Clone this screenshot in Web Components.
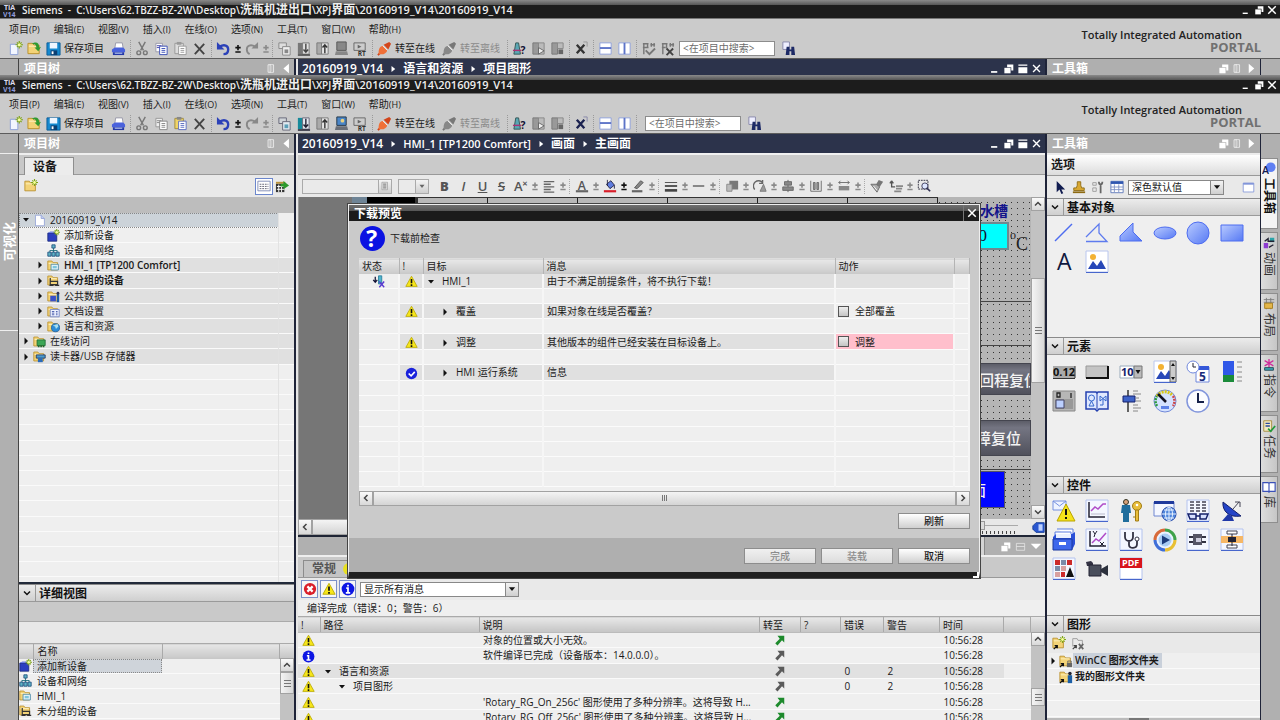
<!DOCTYPE html>
<html lang="zh-CN">
<head>
<meta charset="utf-8">
<title>Siemens - 20160919_V14</title>
<style>
html,body{height:100%;margin:0}
body{display:flex;flex-direction:column;overflow:hidden;background:#b0b0b0;color:#1a1a1a;
font-family:"Open Sans","Noto Sans CJK SC",sans-serif;font-size:10px;line-height:15px}
.strip{flex:0 0 75px;overflow:hidden}
.main{flex:1;min-height:0}
</style>
</head>
<body>
<tia-shell class="strip" variant="graphics"></tia-shell>
<tia-shell class="main" variant="screens">
<tia-project-tree slot="left"></tia-project-tree>
<tia-detail-view slot="left"></tia-detail-view>
<tia-editor slot="centre"></tia-editor>
<tia-inspector slot="centre"></tia-inspector>
<tia-toolbox slot="right"></tia-toolbox>
<tia-download-dialog slot="overlay"></tia-download-dialog>
</tia-shell>
<script>
const BASE=`*{box-sizing:border-box}
:host{display:block;box-sizing:border-box}
button,input,select{font:inherit;color:inherit;margin:0}
.ib{border:0;background:none;padding:0;display:flex;align-items:center;justify-content:center}
table{border-collapse:collapse;table-layout:fixed;width:100%}
th,td{padding:0;text-align:left;font-weight:400;white-space:nowrap;overflow:hidden}
td{line-height:14px}`;
function define(name,css,html){
  customElements.define(name,class extends HTMLElement{
    constructor(){super();this.attachShadow({mode:'open'});}
    connectedCallback(){this.shadowRoot.innerHTML='<style>'+BASE+css+'</style>'+html(this);}
  });
}

/* ---------- icons ---------- */
const folder='<path d="M1 13.500V2.500h5l1.500 2H13v9z" fill="#f3d377" stroke="#b98f2a"/><path d="M2 5.500h10" stroke="#fff2c4"/>';
const star='<path d="M12 0v8M8 4h8M9.500 1.500l5 5M14.500 1.500l-5 5" stroke="#7fa51a" stroke-width="1.300"/><circle cx="12" cy="4" r="1.600" fill="#f6ff9a"/>';
const doc=(c)=>`<path d="M6 5.500h8v9H6z" fill="#fff" stroke="${c}"/><path d="M8 8h4M8 10h4M8 12h4" stroke="${c}"/>`;
const net='<path d="M8 4v4M3.500 11V8h9v3M8 8v3" stroke="#167" fill="none"/><path d="M6 1h4v4H6zM1 10h4v5H1zM6 10h4v5H6zM11 10h4v5h-4z" fill="#5fb3c4" stroke="#1c4c7c"/>';
const pic=(x='')=>`<path d="M1 1h22v21H1z" fill="#fff" stroke="#b9c6ee"/><circle cx="8" cy="7" r="3" fill="#f3b234"/><path d="M3 19l5-8 4 5 4-6 5 9z" fill="#2747b8"/>${x}<path d="M1 22.500h22" stroke="#4766cc"/>`;
const card='<path d="M1 1h22v21H1z" fill="#f4f7ff" stroke="#b4c3ee"/><path d="M1 22.500h22" stroke="#4766cc"/>';
const grad='<defs><linearGradient id="g" x1="0" y1="0" x2="1" y2="1"><stop offset="0" stop-color="#b9cbff"/><stop offset="1" stop-color="#5679f4"/></linearGradient></defs>';
const tri=(c)=>`<path d="M8 1.500L15 14H1z" fill="#f7e61a" stroke="${c}"/><path d="M8 5v5M8 11.500v2" stroke="#111" stroke-width="2"/>`;
const plug=(a,b)=>`<path d="M1 15l3-3" stroke="${b}" stroke-width="2"/><path d="M2 14c-1-5 1-8 4-9l5 5c-1 3-4 5-9 4z" fill="${a}"/><path d="M7 4l6-3 2 2-3 6z" fill="${b}"/><path d="M6 5l5 5" stroke="#fff" stroke-width=".8"/>`;
const tx=(x,y,s,c,t,w=700)=>`<text x="${x}" y="${y}" font-size="${s}" font-weight="${w}" fill="${c}">${t}</text>`;
const I={
 logo:tx(1,8,8,'#dde','TIA')+tx(0,16,8,'#8e9ad8','V14'),
 new:'<path d="M2.500 3.500h8v11h-8z" fill="#f2f6ff" stroke="#8ca0d8"/>'+star,
 open:folder+'<path d="M5 3c5-3 8-1 8 4l2-1-3 5-4-4h2c0-3-2-4-5-4z" fill="#2f9a2f"/>',
 save:'<path d="M1 2h14v13H1z" fill="#1689cf" stroke="#0d5d99"/><path d="M4 2h8v6H4z" fill="#eef6ff"/><path d="M5 10h7v5H5z" fill="#0b3f72"/><path d="M6 11h2v3H6z" fill="#fff"/>',
 print:'<path d="M5 2h7l1 6H4z" fill="#fff" stroke="#99a"/><path d="M1 9l3-2h9l2 2v3H1z" fill="#4a62dc"/><path d="M2 12h12v3H2z" fill="#2438a8"/><path d="M4 13h8" stroke="#cdf"/>',
 cut:'<path d="M4 1l5 9M11 1L6 10" stroke="#777" stroke-width="1.500"/><circle cx="4" cy="12.500" r="2" fill="none" stroke="#777" stroke-width="1.500"/><circle cx="11" cy="12.500" r="2" fill="none" stroke="#777" stroke-width="1.500"/>',
 copyb:'<path d="M2 2.500h7v9H2z" fill="#fff" stroke="#99a"/><path d="M3 5h5M3 7h5" stroke="#44a"/>'+doc('#3c50b8'),
 copyg:'<path d="M2 2.500h7v9H2z" fill="#eee" stroke="#999"/><path d="M3 5h5M3 7h5" stroke="#888"/>'+doc('#888'),
 paste:'<path d="M2 2.500h9v11H2z" fill="#f0d468" stroke="#a08c40"/><path d="M4 1h5v3H4z" fill="#888"/>'+doc('#5a6cc0'),
 pasteg:'<path d="M2 2.500h9v11H2z" fill="#ddd" stroke="#999"/><path d="M4 1h5v3H4z" fill="#999"/>'+doc('#999'),
 del:'<path d="M3 3l10 11M13 3L3 14" stroke="#444" stroke-width="2"/>',
 undo:'<path d="M4 6c5-3 9-1 9 3 0 3-2 5-5 5" fill="none" stroke="#2b41b8" stroke-width="2.500"/><path d="M1 1v8h8z" fill="#2b41b8"/>',
 redo:'<path d="M12 6C7 3 3 5 3 9c0 3 1 4 3 5" fill="none" stroke="#888" stroke-width="2"/><path d="M15 1v7H8z" fill="#888"/>',
 pm:'<path d="M4.500 4v6M1.500 7h6M1.500 12h6" stroke="#111" stroke-width="1.800"/>',
 pmg:'<path d="M4.500 4v6M1.500 7h6M1.500 12h6" stroke="#8a8a8a" stroke-width="1.800"/>',
 comp:'<path d="M2 2h8v6H2z" fill="#cfd4d8" stroke="#667"/><path d="M6 6h8v9H6z" fill="#dfe8ee" stroke="#667"/><path d="M8 9h4v4H8z" fill="#5b9fb8"/>',
 compg:'<path d="M2 2h8v6H2z" fill="#ddd" stroke="#888"/><path d="M6 6h8v9H6z" fill="#eee" stroke="#888"/><path d="M8 9h4v4H8z" fill="#888"/>',
 dl:'<path d="M2 2h5v12H2z" fill="#17899a"/><path d="M7 2h7v12H7z" fill="#e6eaf2" stroke="#667"/><path d="M10.500 3v8M8 9l2.500 3L13 9M2 15h13" stroke="#223" stroke-width="1.500" fill="none"/>',
 dlg:'<path d="M2 2h5v12H2z" fill="#777"/><path d="M7 2h7v12H7z" fill="#e0e0e0" stroke="#777"/><path d="M10.500 3v8M8 9l2.500 3L13 9M2 15h13" stroke="#444" stroke-width="1.500" fill="none"/>',
 ul:'<path d="M2 2h5v12H2z" fill="#aaa" stroke="#777"/><path d="M7 2h7v12H7z" fill="#e6e6e6" stroke="#777"/><path d="M10.500 13V4M8 7l2.500-3L13 7" stroke="#333" stroke-width="1.500" fill="none"/>',
 sim:'<path d="M3 1h10v9H3z" fill="#4a86c8" stroke="#234"/><path d="M2 11h12l1 4H1z" fill="#6a6f78"/><circle cx="9" cy="5" r="2" fill="#e8d080"/>',
 simg:'<path d="M3 1h10v9H3z" fill="#888" stroke="#555"/><path d="M2 11h12l1 4H1z" fill="#888"/>',
 rt:'<path d="M1 2h12v8H1z" fill="#ccc" stroke="#666"/><path d="M5 4l4 2-4 2z" fill="#666"/>'+tx(5,16,7,'#333','RT'),
 on:plug('#f07038','#d2451b'), off:plug('#888','#777'),
 acc:'<path d="M4 2h3l2 12H2z" fill="#5aa7b4" stroke="#355"/><path d="M1 10h9" stroke="#a37" stroke-width="1.500"/>'+tx(9,14,11,'#113','?'),
 run:'<path d="M2 2h6v12H2z" fill="#999" stroke="#777"/><path d="M8 2h6v12H8z" fill="#bbb" stroke="#888"/><path d="M8 7l6 3.500L8 14z" fill="#eee" stroke="#666"/>',
 stop:'<path d="M2 2h6v12H2z" fill="#999" stroke="#777"/><path d="M8 2h6v6H8z" fill="#bbb" stroke="#888"/><path d="M9 9h5v5H9z" fill="#666"/>',
 xref:'<path d="M3 4l8 9M11 4l-8 9" stroke="#1b2250" stroke-width="2.500"/><path d="M10 1h4v5" fill="none" stroke="#88a"/>',
 xrefg:'<path d="M3 4l8 9M11 4l-8 9" stroke="#333" stroke-width="2.500"/><path d="M10 1h4v5" fill="none" stroke="#999"/>',
 sph:'<path d="M2 2h12v12H2z" fill="#fff" stroke="#8fa1dc"/><path d="M2 7.500h12" stroke="#5d74c8" stroke-width="2"/>',
 spv:'<path d="M2 2h12v12H2z" fill="#fff" stroke="#8fa1dc"/><path d="M8 2v12" stroke="#5d74c8" stroke-width="2"/>',
 g1:'<path d="M3 2v12M7 2v5M2 3h6M2 7h6M11 2v4M10 4h5M14 2v4" stroke="#777" stroke-width="1.500"/><path d="M5 10l4 4 6-6" stroke="#777" stroke-width="2" fill="none"/>',
 g2:'<path d="M3 2v12M7 2v6M2 3h6M2 7h4M11 2v4M10 4h5M14 2v4" stroke="#777" stroke-width="1.500"/><path d="M7 8l7 7M14 8l-7 7" stroke="#444" stroke-width="2" fill="none"/>',
 find:'<path d="M2 1h7v8H2z" fill="#eef" stroke="#88a"/><path d="M6 6h3v3h2V6h3l1 9h-4v-4H9v4H5z" fill="#1d2a66"/>',
 wmin:'<path d="M3 13h9" stroke="#fff" stroke-width="2.500"/>', wmax:'<path d="M6 2h9v9h-3V6H6z" fill="#fff"/><path d="M2 7h9v8H2z" fill="#fff"/>',
 wfull:'<path d="M2 2h13v2H2zM2 6h13v9H2z" fill="#fff"/>', wx:'<path d="M3 3l10 10M13 3L3 13" stroke="#fff" stroke-width="2"/>',
 pin:'<path d="M3 2.500h8v11H3zM6 2v12" fill="none" stroke="#fff"/><path d="M8.500 4v8" stroke="#ddd"/>',
 la:'<path d="M13 1v14L5 8z" fill="#fff"/>', ra:'<path d="M4 1v14l8-7z" fill="#fff"/>', da:'<path d="M1 5h14l-7 7z" fill="#fff"/>',
 dock:'<path d="M2 3.500h12v10H2zM2 8h12" fill="none" stroke="#eee"/>',
 bc:'<path d="M6 4v8l5-4z" fill="#fff"/>',
 fold:'<path d="M4 6l4 4 4-4" fill="none" stroke="#111" stroke-width="2"/>',
 topen:'<path d="M2 4h12l-6 7z" fill="#111"/>', tclosed:'<path d="M5 1v14l7-7z" fill="#111"/>',
 su:'<path d="M4 10l4-4 4 4" fill="none" stroke="#444" stroke-width="2"/>', sd:'<path d="M4 6l4 4 4-4" fill="none" stroke="#444" stroke-width="2"/>',
 sl:'<path d="M10 4L6 8l4 4" fill="none" stroke="#444" stroke-width="2"/>', sr:'<path d="M6 4l4 4-4 4" fill="none" stroke="#444" stroke-width="2"/>',
 drop:'<path d="M3 5h10l-5 6z" fill="#111"/>', dropg:'<path d="M4 6h8l-4 5z" fill="#666"/>',
 page:'<path d="M3 1.500h7l4 4v9H3z" fill="#fff" stroke="#8f9fd6"/><path d="M10 1.500v4h4" fill="#c5d0f2" stroke="#8f9fd6"/>',
 fnew:folder+star,
 list:'<path d="M1 2.500h14v11H1z" fill="#fff" stroke="#7885b0"/><path d="M3 6h10M3 8.500h10M3 11h10" stroke="#556" stroke-dasharray="2 1"/>',
 netx:'<path d="M1 5h9v9H1z" fill="#333"/><path d="M2 8h8M2 11h8M4 6v8M7 6v8" stroke="#fff"/><path d="M1 3h10v2H1z" fill="#b9913b"/><path d="M9 2l6 5-6 4V8H6V5h3z" fill="#2d9a2d"/>',
 add:'<path d="M1 5h11v10H1z" fill="#2c3fc0" stroke="#19277c"/><path d="M1 5l3-2h10l-2 2" fill="#6f80e6"/>'+star,
 net,
 hmi:folder+'<path d="M5 6.500h9v7H5z" fill="#e5f4fa" stroke="#4788a8"/><path d="M7 8.500h5v3H7z" fill="#7cc5dc"/>',
 ung:folder+'<path d="M4 5v8h9V9H4M3 14h5M10 14h5" stroke="#333" stroke-width="1.500" fill="none"/>',
 com:folder+'<path d="M4 7h7v7H4z" fill="#3a50c8"/><path d="M12 5h3v10h-3z" fill="#1c5aa4"/><circle cx="13.500" cy="4" r="1.700" fill="#335"/>',
 docs:folder+'<path d="M4 5.500h11v9H4z" fill="#eef2ff" stroke="#6a7cc2"/><path d="M6 8h3M6 10h3M6 12h3M11 8h2M11 10h2M11 12h2" stroke="#3347a0"/>',
 lang:folder+'<circle cx="10.500" cy="9.500" r="5" fill="#2d8dd8" stroke="#1c5f9c"/><path d="M7 7l3 1 1 3 3-3-1-3z" fill="#a9e0f0"/>',
 acs:folder+'<path d="M5 6h10v7H5z" fill="#3da656" stroke="#1d6a33"/><path d="M6 14h2M9 14h2M12 14h2" stroke="#1d6a33" stroke-width="2"/>',
 usb:folder+'<path d="M4 6h11v4H4z" fill="#4b9bd0" stroke="#235"/><path d="M6 10h6v5H6z" fill="#2a6ab8"/>',
 q:'<circle cx="12" cy="12" r="12" fill="#0b12e2"/>'+tx(6,20,22,'#fff','?'),
 warn:tri('#b8a800'),
 ok:'<circle cx="8" cy="8" r="7" fill="#1a22dc"/><path d="M4.500 8l3 3 4.500-5" fill="none" stroke="#fff" stroke-width="2"/>',
 err:'<circle cx="8" cy="8" r="7" fill="#da1f2a"/><path d="M5 5l6 6M11 5l-6 6" stroke="#fff" stroke-width="2.500"/>',
 info:'<circle cx="8" cy="8" r="7.300" fill="#0d16e4"/><path d="M8 3v2M6 7h2v5M5.500 12.300h5" stroke="#fff" stroke-width="2" fill="none"/>',
 stat:'<path d="M4 2v6M1.500 6L4 9l2.500-3" stroke="#113" stroke-width="1.500" fill="none"/><path d="M8 1h4v10H8z" fill="#4fb7cc" stroke="#279"/><path d="M9 8l6 7M15 8l-6 7" stroke="#5a3ad0" stroke-width="1.700"/>',
 go:'<path d="M6 1h9v9l-3-3-6 7-3-3 6-6z" fill="#1d8a2c"/>', gog:'<path d="M6 1h9v9l-3-3-6 7-3-3 6-6z" fill="#5b5b5b"/>',
 al:'<path d="M2 3h12M2 6h8M2 9h12M2 12h8M2 15h12" stroke="#666" stroke-width="1.500"/>',
 fc:tx(3,12,14,'#555','A',600)+'<path d="M1 14h14" stroke="#666" stroke-width="2.500"/>',
 bk:'<path d="M4 6l5-4 4 5-5 4z" fill="#5f7de0" stroke="#224"/><path d="M5 1v7M13 7v4" stroke="#224"/><path d="M1 14h14" stroke="#d81f2a" stroke-width="2.500"/>',
 pen:'<path d="M4 10l7-8 3 2-7 7z" fill="#888" stroke="#555"/><path d="M1 14h12" stroke="#666" stroke-width="2.500"/>',
 lw:'<path d="M1 4h14" stroke="#444"/><path d="M1 8h14" stroke="#444" stroke-width="2"/><path d="M1 13h14" stroke="#444" stroke-width="3"/>',
 ln:'<path d="M1 8h13" stroke="#555" stroke-width="1.500"/>',
 ord:'<path d="M5 2h10v10H5z" fill="#777"/><path d="M2 6h6v8H2z" fill="#bbb" stroke="#888"/>',
 rot:'<path d="M2 12a6 6 0 0 1 9-8M11 1v4H7" fill="none" stroke="#666" stroke-width="1.500"/><path d="M8 14l4-8 3 8z" fill="#999" stroke="#777"/>',
 alc:'<path d="M8 1v14" stroke="#555"/><path d="M4 3h8v4H4zM2 9h12v4H2z" fill="#888" stroke="#666"/>',
 dis:'<path d="M2 2v12M14 2v12M5 4h2v8H5zM9 4h2v8H9zM2 14h12" fill="#999" stroke="#666"/>',
 same:'<path d="M2 4h12M4 2L2 4l2 2M12 2l2 2-2 2" fill="none" stroke="#666"/><path d="M2 8h12v5H2z" fill="#888"/>',
 brush:'<path d="M10 1l5 2-4 6-4-3z" fill="#777"/><path d="M1 6l6 0 4 3-3 6z" fill="#aaa" stroke="#666"/><path d="M4 8l4 5" stroke="#fff"/>',
 tab:'<path d="M3 2v7h4M3 2L1 5M3 2l2 3" fill="none" stroke="#555" stroke-width="1.500"/><path d="M8 8h8M8 11h7M6 14h8" stroke="#888" stroke-width="2"/>',
 zoomr:'<path d="M1.500 1.500h11v10h-11z" fill="none" stroke="#223" stroke-dasharray="2 1"/><circle cx="9" cy="8" r="3.500" fill="#dde6ff" stroke="#335"/><path d="M11 10l4 4" stroke="#335" stroke-width="2"/>',
 dotlist:'<path d="M3 2h9v12H3z" fill="#ddd" stroke="#999"/><path d="M5 5h5M5 8h5M5 11h5" stroke="#444"/>',
 scr:'<path d="M5 2h10v12H5l-4-4V6z" fill="#2a57d0" stroke="#123a90"/><path d="M8 4h5v8H8z" fill="#bcd0ff"/>',
 ptr:'<path d="M5 1v12l3-3 2 5 2-1-2-4h4z" fill="#111c50"/>',
 stamp:'<path d="M6 2h4v4l1 3h3v3H2V9h3l1-3z" fill="#d9a832" stroke="#8d6a12"/><path d="M1 14h14" stroke="#8d6a12" stroke-width="2"/>',
 tool:'<path d="M2 3h4v3H2zM2 9h4v4H2z" fill="none" stroke="#999"/><path d="M9 2c0 4 4 4 4 0M11 5v10" stroke="#666" stroke-width="2" fill="none"/>',
 tbl:'<path d="M1 1.500h14v13H1z" fill="#fff" stroke="#5a76b8"/><path d="M1 3h14" stroke="#2f57b0" stroke-width="3"/><path d="M1 8h14M1 11h14M5 5v9M10 5v9" stroke="#7d90c4"/>',
 win:'<path d="M1.500 2.500h13v11h-13z" fill="#fff" stroke="#7f93d8"/><path d="M1.500 3.500h13" stroke="#7f93d8" stroke-width="2"/>',
 gnew:folder+star+'<path d="M2 15l4-4M3 11h3v3" stroke="#111" fill="none" stroke-width="1.500"/>',
 gdel:'<path d="M2 12V3h5l1 2h5v4" fill="none" stroke="#999"/><path d="M2 15l4-4M3 11h3v3" stroke="#444" fill="none" stroke-width="1.500"/><path d="M9 9l5 6M14 9l-5 6" stroke="#666" stroke-width="2"/>',
 gf:folder+'<path d="M1 15l4-4M2 11h3v3" stroke="#111" fill="none" stroke-width="1.500"/><path d="M9 10h6v5H9z" fill="#666"/><path d="M10 10V8h4v2" fill="none" stroke="#666"/>',
 gm:folder+'<path d="M1 15l4-4M2 11h3v3" stroke="#111" fill="none" stroke-width="1.500"/><path d="M10 6h5v9h-5z" fill="#1b5fa6"/><circle cx="12.500" cy="4" r="2" fill="#223"/>',
 /* right rail */
 rA:'<circle cx="10" cy="6" r="5.500" fill="#5f7ff2"/>'+tx(0,14,12,'#111c50','A',600),
 rB:'<path d="M9 2h5v5H9z" fill="#2aa3a8"/><path d="M2 8h5v6H2z" fill="#8c3ad0"/><path d="M3 6l4-3v3h7M8 13l5-3" stroke="#223" fill="none" stroke-width="1.500"/>',
 rC:'<path d="M2 3h12M2 6h12M5 1v13M10 1v13" stroke="#777"/><path d="M3 7h9v6H3z" fill="#e3b64a" stroke="#a47a1a"/>',
 rD:'<path d="M8 1v10M3 3l10 6M13 3L3 9" stroke="#d02c9c" stroke-width="1.500"/><path d="M3 11h10v3H3z" fill="#3aa8b4" stroke="#245"/>',
 rE:'<path d="M2 2h9v12H2z" fill="#f2e9c0" stroke="#a58a3a"/><path d="M4 5h5M4 8h5" stroke="#2b4a9c" stroke-width="1.500"/><path d="M7 11l3 3 5-6" stroke="#1f9a3a" stroke-width="2" fill="none"/>',
 rF:'<path d="M1 3h6l1 1 1-1h6v10H9l-1 1-1-1H1zM8 4v9" fill="#fff" stroke="#3a50b8" stroke-width="1.300"/>',
 /* 24px toolbox */
 Bline:'<path d="M3 20L20 3" stroke="#4d6cf0" stroke-width="1.500"/>',
 Bpoly:'<path d="M1 16L14 3v9l8 8.500H1" fill="none" stroke="#5e7bee" stroke-width="1.300"/>',
 Bpgon:grad+'<path d="M1 20v-5L14 2v9l9 9z" fill="url(#g)" stroke="#4d6cf0"/>',
 Bell:grad+'<ellipse cx="12" cy="12" rx="11" ry="6" fill="url(#g)" stroke="#4d6cf0"/>',
 Bcir:grad+'<circle cx="12" cy="12" r="11" fill="url(#g)" stroke="#4d6cf0"/>',
 Brect:grad+'<path d="M1 4h22v16H1z" fill="url(#g)" stroke="#4d6cf0"/>',
 Btext:tx(5,20,23,'#10183e','A',500),
 Bpic:pic(),
 Eio:'<path d="M1 6h22v12H1z" fill="#aaa"/>'+tx(1,16,11,'#111','0.12')+'<path d="M1 18.500h22M23 6v12" stroke="#333"/>',
 Ebtn:'<path d="M1 6h22v12H1z" fill="#c4c4c4" stroke="#999"/><path d="M1 18h22V6" fill="none" stroke="#111" stroke-width="2"/>',
 Esym:'<path d="M1 6h14v12H1z" fill="#fff" stroke="#9ab"/>'+tx(2,16,11,'#14206a','10')+'<path d="M15 6h8v12h-8z" fill="#bbb" stroke="#777"/><path d="M16.500 10h5L19 14z" fill="#111"/>',
 Egio:pic('<path d="M17 1h6v21h-6z" fill="#ccc" stroke="#666"/><path d="M18 6h4l-2-3zM18 17h4l-2 3z" fill="#111"/>'),
 Edt:'<path d="M10 7h13v15H10z" fill="#fff" stroke="#7188dc"/><path d="M10 8h13" stroke="#3457d8" stroke-width="4"/><circle cx="7" cy="7" r="6" fill="#fff" stroke="#7188dc"/><path d="M7 3v4h3" fill="none" stroke="#223"/>'+tx(13,21,12,'#1a2c7c','5'),
 Ebar:'<path d="M3 1h11v15H3z" fill="#3058e8"/><path d="M3 15h11v7H3z" fill="#1b8b3a"/><path d="M17 2h5M17 7h5M17 12h5M17 17h5M17 21h5" stroke="#888"/>',
 Esw:'<path d="M1 2h22v20H1z" fill="#b6b6b6" stroke="#888"/><path d="M5 4h3v4H5zM19 4v5" fill="none" stroke="#222" stroke-width="1.300"/><path d="M3 10h18v10H3z" fill="#999"/><path d="M4 11h8v8H4z" fill="#bcd0ff" stroke="#446"/>',
 Elib:'<path d="M1 3h10l1 1 1-1h10v17H14l-2 2-2-2H1z" fill="#dfe8ff" stroke="#2440b0" stroke-width="1.500"/><path d="M12 4v16" stroke="#2440b0"/><circle cx="6.500" cy="9" r="3" fill="none" stroke="#36c"/><path d="M4 17l2.500-5L9 17zM15 7l6 5v-5l-6 5zM18 10v6h-3" fill="none" stroke="#36c"/>',
 Esl:'<path d="M9 1v22" stroke="#333" stroke-width="1.500"/><path d="M4 7h12v6H4z" fill="#3d62c8" stroke="#14206a"/><path d="M14 2h5M14 5h8M17 9h3M17 12h5M14 16h5M14 19h8M14 22h5" stroke="#888"/>',
 Egau:'<circle cx="12" cy="12" r="11" fill="#d4e2ff" stroke="#7088d8"/><path d="M4 17a9.500 9.500 0 0 1 0-10" stroke="#2c9a3a" stroke-width="2.500" fill="none" stroke-dasharray="2 1"/><path d="M4 7a9.500 9.500 0 0 1 15-1" stroke="#d8c81a" stroke-width="3" fill="none" stroke-dasharray="2 1"/><path d="M20 7a9.500 9.500 0 0 1 0 10" stroke="#d04848" stroke-width="2.500" fill="none" stroke-dasharray="2 1"/><path d="M5 5l8 8" stroke="#112" stroke-width="2.500"/><path d="M8 17h8v3H8z" fill="#5d82e8"/>',
 Eclk:'<circle cx="12" cy="12" r="11" fill="#fbfcff" stroke="#8296dc" stroke-width="1.500"/><path d="M12 4v9h6" fill="none" stroke="#14204a" stroke-width="2"/>',
 Cal:'<path d="M1 2h13v9H1z" fill="#eef3ff" stroke="#7590e0"/><path d="M1 2l6.500 5L14 2" fill="none" stroke="#7590e0"/><path d="M14 5l9 17H5z" fill="#f5e21a" stroke="#b9a400"/><path d="M14 10v6M14 18v2" stroke="#111" stroke-width="2"/>',
 Ctr:card+'<path d="M4 3v15h16" fill="none" stroke="#223" stroke-width="1.500"/><path d="M6 12l4-4 3 2 5-5h3" fill="none" stroke="#b04cc8" stroke-width="1.500"/><path d="M6 15h14" stroke="#bbc"/>',
 Cusr:'<circle cx="7" cy="3" r="2.500" fill="#d9a27a" stroke="#332"/><path d="M3 6h8l1 8h-2v9H4v-9H2z" fill="#1f6d9c"/><circle cx="18" cy="7" r="4.500" fill="#e8bd3a" stroke="#a07c14"/><circle cx="18" cy="6" r="1.300" fill="#fff"/><path d="M16.500 11h3v11h-3zM14 18h3" fill="#e8bd3a" stroke="#a07c14"/>',
 Cweb:'<path d="M1 3h20v14H1z" fill="#f4f7ff" stroke="#6e86d0"/><path d="M1 3.500h20" stroke="#1f3a9c" stroke-width="3"/><circle cx="16" cy="15" r="7" fill="#4f86dc" stroke="#2448a8"/><path d="M9 15h14M16 8v14M11 11h10M11 19h10" stroke="#e9f2ff"/><ellipse cx="16" cy="15" rx="3.500" ry="7" fill="none" stroke="#e9f2ff"/>',
 Crec:card+'<path d="M4 3h16M4 6h16M4 9h16M4 12h16" stroke="#445" stroke-dasharray="4 2" stroke-width="1.300"/><path d="M2 15h8v5H4zM14 15h8l-2 5h-6zM10 17h4" fill="#d7e0ff" stroke="#14206a" stroke-width="1.500"/>',
 Csat:'<path d="M3 3c-1 9 6 16 18 14z" fill="#2444c8" stroke="#14206a"/><path d="M8 15l-6 7h12l-2-5z" fill="#2038a8"/><path d="M13 10l6-7M15 3h5v5" stroke="#445" fill="none"/>',
 Crcp:'<path d="M3 4h16v8H3zM5 1h16v10" fill="#fff" stroke="#5a7ce0"/><path d="M1 9l3-3h16l3-2v12l-3 6H1z" fill="#2b50d8"/><path d="M4 6h15v4H4z" fill="#eaf0ff"/><path d="M1 11h19v11H1z" fill="#3f68ec" stroke="#1b38a0"/><path d="M7 14h7v3H7z" fill="#fff"/>',
 Cxy:card+'<path d="M5 3v15h16" fill="none" stroke="#223" stroke-width="1.500"/><path d="M7 15l4-4 3 2 7-8" fill="none" stroke="#b04cc8" stroke-width="1.500"/><path d="M8 3l2 3 2-3M10 6l-1 3M15 14l4 4M19 14l-4 4" stroke="#223" fill="none"/>',
 Cdia:card+'<path d="M6 4v5a4 4 0 0 0 8 0V4M10 13v4c0 4 8 4 8-1v-3" fill="none" stroke="#334" stroke-width="1.800"/><circle cx="18" cy="11" r="2" fill="#fff" stroke="#334"/>',
 Cmed:'<circle cx="12" cy="12" r="9" fill="#eaf2ff"/><path d="M12 2a10 10 0 0 1 10 10" stroke="#3fa24a" stroke-width="3" fill="none"/><path d="M22 12a10 10 0 0 1-10 10" stroke="#e8c034" stroke-width="3" fill="none"/><path d="M12 22A10 10 0 0 1 2 12" stroke="#3f6fd8" stroke-width="3" fill="none"/><path d="M2 12A10 10 0 0 1 12 2" stroke="#d86a3a" stroke-width="3" fill="none"/><circle cx="12" cy="12" r="6.500" fill="#a9cdf4"/><path d="M9 7.500v9l8-4.500z" fill="#1c3c7c"/>',
 Cplc:card+'<path d="M7 6h9v11H7z" fill="#556"/><path d="M3 9h4M3 14h4M16 9h4M16 14h4" stroke="#334" stroke-width="2"/><path d="M10 10h5v4h-5z" fill="#ccd"/>',
 Cplv:card+'<path d="M1 8h22v7H1z" fill="#f6b766"/><path d="M7 3h10v3H7zM7 17h10v3H7z" fill="#fff" stroke="#445"/><path d="M8 9h8v5H8z" fill="#223"/><path d="M12 6v12" stroke="#223"/>',
 Csys:card+'<path d="M3 3h5v5H3zM15 3h5v5h-5z" fill="#cc2a2a"/><path d="M9 3h5v5H9zM3 9h5v5H3z" fill="#7b8ba8"/><path d="M9 9h5v5H9zM3 15h5v5H3z" fill="#d8a0a0"/><path d="M9 15h4v5H9z" fill="#cc2a2a"/><path d="M18 10l4 10h-8z" fill="#111"/>',
 Ccam:'<path d="M1 5l5-1 2 2v3H2z" fill="#334"/><path d="M4 8h12v11H4z" fill="#4a4f5c" stroke="#223"/><path d="M16 12l7-4v11l-7-4z" fill="#2b303c"/>',
 Cpdf:'<path d="M1 1h22v21H1z" fill="#fff" stroke="#b4c3ee"/><path d="M1 1h22v10H1z" fill="#d8141c"/>'+tx(3,9,9,'#fff','PDF')+'<path d="M1 22.500h22" stroke="#4766cc"/>'
};
define('tia-icon',':host{display:inline-block;flex:none}svg{display:block;width:100%;height:100%}',e=>{
  const n=e.getAttribute('name'),s=e.getAttribute('size')||14;
  e.style.width=s+'px';e.style.height=s+'px';
  const v=/^[B-E][a-z]/.test(n)||n==='q'?'24 24':/^pm/.test(n)?'9 16':'16 16';
  if(/^pm/.test(n))e.style.width='8px';
  return `<svg viewBox="0 0 ${v}" aria-hidden="true">${I[n]}</svg>`;
});
const ic=(n,s)=>`<tia-icon name="${n}"${s?` size="${s}"`:''}></tia-icon>`;
const bt=(n,s,w)=>`<button class="ib${w?' '+w:''}" aria-label="${n}">${ic(n,s)}</button>`;

/* ---------- shared parts ---------- */
define('tia-pane-header',`:host{display:flex;align-items:center;height:19px;background:#afafaf;color:#fff;font-size:12px;font-weight:600;padding:0 2px 0 5px;white-space:nowrap}
:host([dark]){background:#2c334b;padding-left:5px}
.t{flex:1;display:flex;align-items:center;gap:4px}.t small{font-size:11px}.ib{width:14px}`,
 e=>`<div class="t">${e.getAttribute('text').split('|').map(t=>/Comfort/.test(t)?`<small>${t}</small>`:`<span>${t}</span>`).join(ic('bc',12))}</div>${(e.getAttribute('tools')||'').split(' ').map(n=>bt(n,11)).join('')}`);

define('tia-section',`:host{display:block}
header{display:flex;align-items:center;height:18px;border-top:1px solid #8a8a8a;border-bottom:1px solid #9a9a9a;background:linear-gradient(#ececec,#cfcfcf);font-size:12px;font-weight:700;color:#111;white-space:nowrap}
.ib{width:17px;align-self:stretch;border-right:1px solid #999}
span{padding-left:3px}`,
 e=>`<header>${bt('fold',12)}<span>${e.getAttribute('text')}</span></header><slot></slot>`);

define('tia-scrollbar',`:host{display:flex;background:#c2c2c2}
:host([vertical]){flex-direction:column;width:14px}
.ib{flex:0 0 14px;background:linear-gradient(#fafafa,#d8d8d8);border:1px solid #a2a2a2}
.b{flex:0 1 var(--before,0px)}.a{flex:1 1 0px}
.th{flex:var(--grow,0) 0 var(--thumb,40px);background:linear-gradient(#f4f4f4,#d4d4d4);border:1px solid #a2a2a2;display:flex;align-items:center;justify-content:center}
:host([vertical]) .th{background:linear-gradient(90deg,#f4f4f4,#d8d8d8)}
i{width:6px;height:6px;background:repeating-linear-gradient(90deg,#777 0 1px,transparent 1px 2px)}
:host([vertical]) i{background:repeating-linear-gradient(#777 0 1px,transparent 1px 3px);width:7px;height:7px}
:host([fill]) .a{display:none}`,
 e=>{const v=e.hasAttribute('vertical');return `${bt(v?'su':'sl',12)}<div class="b"></div><div class="th"><i></i></div><div class="a"></div>${bt(v?'sd':'sr',12)}`});

define('tia-select',`:host{display:flex;height:15px;background:#fff;border:1px solid #888}
select{appearance:none;border:0;background:none;flex:1;min-width:0;padding:0 3px;line-height:13px;height:13px;outline:0}
span{width:13px;border-left:1px solid #888;background:linear-gradient(#f4f4f4,#cfcfcf);display:flex;align-items:center;justify-content:center;pointer-events:none}
:host([dim]){background:#eaeaea;border-color:#aaa}:host([dim]) span{border-color:#aaa}`,
 e=>`<select aria-label="${e.getAttribute('label')}"><option>${e.getAttribute('value')||''}</option></select><span>${ic(e.getAttribute('arrow')||'drop',10)}</span>`);

/* ---------- application shell ---------- */
define('tia-titlebar',`:host{display:flex;align-items:center;height:19px;padding:1px 2px 0 3px;background:linear-gradient(#8a8a8a 0,#555 5px,#1c1c1c 5px,#1c1c1c 18px,#777 18px);color:#eee;font-size:10px;font-weight:600;white-space:pre}
.t{flex:1;padding-left:5px}b{font-size:12px;font-weight:600}em{font-style:normal;font-size:11px}.ib{width:13px}`,
 ()=>`${ic('logo',14)}<div class="t">Siemens  -  C:\\Users\\62.TBZZ-BZ-2W\\Desktop\\<b>洗瓶机进出口</b>\\XPJ<b>界面</b><em>\\20160919_V14\\20160919_V14</em></div>${bt('wmin',9)}${bt('wmax',10)}${bt('wx',12)}`);

define('tia-menubar',`:host{display:block}nav{display:flex;gap:14px;padding:0 9px;height:20px;align-items:center;white-space:nowrap}
a{color:#1c1c1c;text-decoration:none}small{font-size:9px}`,
 ()=>'<nav>'+[['项目','P'],['编辑','E'],['视图','V'],['插入','I'],['在线','O'],['选项','N'],['工具','T'],['窗口','W'],['帮助','H']].map(m=>`<a href="#">${m[0]}<small>(${m[1]})</small></a>`).join('')+'</nav>');

define('tia-toolbar',`:host{display:flex;height:19px;align-items:center;white-space:nowrap}
.g{display:flex;align-items:center;padding:0 2px;height:17px}
.g+.g{border-left:1px dotted #9a9a9a}
.g .ib{width:19px}.g .n{width:9px}
.tx{border:0;background:none;padding:0 5px 0 1px}
.off{color:#8a8a8a}
.first{padding-left:6px}
input{width:96px;height:15px;border:1px solid #8c8c8c;background:#fff;padding:0 3px}
input::placeholder{color:#6c6c6c;opacity:1}
.s{gap:4px}.wide{padding-left:8px}`,
 e=>{const s=e.getAttribute('variant')==='screens';
 const g=(l,c='')=>`<div class="g ${c}">${l}</div>`, m=a=>a.map(n=>bt(n,15,/^pm/.test(n)?'n':'')).join('');
 const find='<input type="search" aria-label="search" placeholder="&lt;在项目中搜索&gt;">'+bt('find',15);
 return g(m(['new','open','save'])+'<button class="tx">保存项目</button>'+m(['print']),'first')
 +g(m(['cut',s?'copyg':'copyb',s?'paste':'pasteg','del']))
 +g(m(['undo','pm','redo','pmg']))
 +g(m([s?'comp':'compg',s?'dl':'dlg','ul',s?'sim':'simg','rt']))
 +g(m(['on'])+'<button class="tx">转至在线</button>'+m(['off'])+'<button class="tx off" disabled>转至离线</button>')
 +g(m(['acc','run','stop']))+g(m([s?'xref':'xrefg']))+g(m(['sph','spv']))
 +(s?g(find,'s wide'):g(m(['g1','g2'])+'<div class="g s">'+find+'</div>'))});

define('tia-rail-tab',`:host{display:flex;flex-direction:column;align-items:center;gap:2px;background:linear-gradient(90deg,#ddd,#c6c6c6);border:1px solid #8e8e8e;border-left:0;padding:3px 0;width:17px;color:#333}
:host([active]){background:#f4f4f4;color:#111;font-weight:600}
a{color:inherit;text-decoration:none;writing-mode:vertical-rl;text-orientation:sideways;font-size:12px;line-height:15px;white-space:nowrap}`,
 e=>`${ic(e.getAttribute('icon'),14)}<a href="#">${e.getAttribute('text')}</a>`);

define('tia-shell',`:host{display:flex;flex-direction:column;position:relative;background:#cbcbcb}
.head{display:flex;border-bottom:1px solid #5c5c5c;background:#cbcbcb}
.bars{flex:1}.brand{display:flex;flex-direction:column;padding:9px 19px 0 0;align-items:flex-end;white-space:nowrap}
.brand b{font-size:11px;line-height:13px;font-weight:600;margin-right:19px;color:#222}
.brand strong{font-size:13px;line-height:13px;font-weight:700;color:#717171}
.body{flex:1;min-height:0;display:grid;grid-template-columns:19px 277px minmax(0,1fr) 216px 19px;overflow:hidden}
.col{display:flex;flex-direction:column;min-width:0;min-height:0;overflow:hidden}
.rail{background:#b0b0b0}
.left{border-right:2px solid #1e2338;background:#c8c8c8}
.mid{border-left:2px solid #e6e6e6;background:#c8c8c8}
.right{border-left:2px solid #1e2338;border-right:1px solid #1e2338;background:#efefef}
.viz{border-right:1px solid #444}
.viz div{margin-top:19px;height:178px;border-top:1px solid #eee;border-bottom:1px solid #eee;display:flex;align-items:center;justify-content:center}
.viz span{writing-mode:vertical-rl;text-orientation:sideways;transform:rotate(180deg);font-size:13px;color:#fff;font-weight:600}
.tabs{gap:3px;padding-top:24px;align-items:flex-start}
.tabs tia-rail-tab{height:58px}.tabs tia-rail-tab:first-child{height:71px}.tabs tia-rail-tab:last-child{height:47px}
.mid tia-pane-header,.left tia-pane-header,.right tia-pane-header{flex:none}
.mid tia-pane-header{margin-left:-1px}`,
 e=>{const v=e.getAttribute('variant'),s=v==='screens';
 return `<tia-titlebar></tia-titlebar>
<div class="head"><div class="bars"><tia-menubar></tia-menubar><tia-toolbar variant="${v}"></tia-toolbar></div>
<div class="brand"><b>Totally Integrated Automation</b><strong>PORTAL</strong></div></div>
<div class="body">
<div class="col rail viz">${s?'<div><span>可视化</span></div>':''}</div>
<div class="col left"><tia-pane-header text="项目树" tools="pin la"></tia-pane-header><slot name="left"></slot></div>
<div class="col mid"><tia-pane-header dark text="${s?'20160919_V14|HMI_1 [TP1200 Comfort]|画面|主画面':'20160919_V14|语言和资源|项目图形'}" tools="wmin wmax wfull wx"></tia-pane-header><slot name="centre"></slot></div>
<div class="col right"><tia-pane-header text="工具箱" tools="wmax pin ra"></tia-pane-header><slot name="right"></slot></div>
<div class="col rail tabs">${s?`<tia-rail-tab active icon="rA" text="工具箱"></tia-rail-tab><tia-rail-tab icon="rB" text="动画"></tia-rail-tab><tia-rail-tab icon="rC" text="布局"></tia-rail-tab><tia-rail-tab icon="rD" text="指令"></tia-rail-tab><tia-rail-tab icon="rE" text="任务"></tia-rail-tab><tia-rail-tab icon="rF" text="库"></tia-rail-tab>`:''}</div>
</div><slot name="overlay"></slot>`});

/* ---------- left column ---------- */
define('tia-tree-row',`:host{display:flex;align-items:center;height:15px;border-bottom:1px solid #fafafa;white-space:nowrap;padding-left:calc(var(--lv)*14px);flex:none}
:host([group]){background:#e0e0e0}
:host([sel]){background:#ccd3d9;outline:1px dotted #888;outline-offset:-1px}
.a{width:14px;display:flex;justify-content:center}
span{padding-left:4px}:host([bold]) span{font-weight:600}:host([heavy]) span{font-weight:700}`,
 e=>{e.style.setProperty('--lv',e.getAttribute('level')||0);const i=e.getAttribute('icon'),o=e.getAttribute('open');
 return `<div class="a">${o?ic(o==='yes'?'topen':'tclosed',8):''}</div>${i?ic(i,13)+`<span>${e.getAttribute('text')}</span>`:''}`});

define('tia-project-tree',`:host{display:flex;flex-direction:column;flex:0 0 431px;border-top:2px solid #efefef;border-bottom:2px solid #222a3a;background:#c8c8c8;overflow:hidden}
.tabs{flex:0 0 20px;display:flex;align-items:flex-end;padding-left:5px;border-bottom:1px solid #999}
.tabs button{width:50px;height:18px;margin-bottom:-1px;border:1px solid #8e8e8e;border-bottom:0;background:#ececec;font-size:12px;line-height:16px;font-weight:700;padding:0 8px 0 0}
.tools{flex:0 0 22px;background:#e9e9e9;display:flex;align-items:center;padding:0 4px 0 5px;gap:2px}
.tools .sp{flex:1}.on{border:1px solid #6b86cc;background:#fff;width:18px;height:17px}
.band{flex:0 0 16px;background:#bdbdbd}
.rows{flex:1;background:#efefef;display:flex;flex-direction:column;position:relative;min-height:0;overflow:hidden}
.rows tia-tree-row:nth-child(5n){height:16px}
.rows::after{content:"";position:absolute;top:0;bottom:0;right:15px;border-left:1px solid #e2e2e2}
.first{margin-right:15px}`,
 ()=>{const r=(l,i,t,o,x='')=>`<tia-tree-row level="${l}" icon="${i}" text="${t}" ${o?`open="${o}"`:''} ${x}></tia-tree-row>`;
 return `<div class="tabs"><button>设备</button></div><div class="tools">${bt('fnew',14)}<div class="sp"></div>${bt('list',14,'on')}${bt('netx',15)}</div><div class="band"></div><div class="rows">`
 +r(0,'page','20160919_V14','yes','sel class="first"')+r(1,'add','添加新设备')+r(1,'net','设备和网络')+r(1,'hmi','HMI_1 [TP1200 Comfort]','no','group bold')+r(1,'ung','未分组的设备','no','group heavy')+r(1,'com','公共数据','no','group')+r(1,'docs','文档设置','no','group')+r(1,'lang','语言和资源','no','group')+r(0,'acs','在线访问','no','group')+r(0,'usb','读卡器/USB 存储器','no','group')
 +'<tia-tree-row></tia-tree-row>'.repeat(15)+'</div>'});

define('tia-detail-view',`:host{flex:1;min-height:0;overflow:hidden;background:#efefef}
.g{height:20px;background:#c9c9c9;border-bottom:1px solid #aaa}.l{height:21px;background:#e8e8e8}
.w{display:flex;align-items:flex-start}.w table{flex:1;width:0}
th{height:15px;line-height:14px;background:linear-gradient(#e6e6e6,#c6c6c6);border-right:1px solid #aaa;border-top:1px solid #aaa;padding-left:4px}
td{border-bottom:1px solid #fafafa}td+td{padding-left:4px}
td:first-child{padding:0}tia-icon{display:block}
.sel td:nth-child(2){background:#cfd4da;outline:1px dotted #888;outline-offset:-1px}
.s{width:14px;display:flex;flex-direction:column}.s div{height:15px;background:linear-gradient(#e6e6e6,#c6c6c6);border-top:1px solid #aaa}tia-scrollbar{--thumb:22px;height:78px}`,
 ()=>`<tia-section text="详细视图"></tia-section><div class="g"></div><div class="l"></div><div class="w"><table><colgroup><col style="width:14px"><col style="width:129px"><col></colgroup><thead><tr><th></th><th>名称</th><th></th></tr></thead><tbody>`
 +[['add','添加新设备'],['net','设备和网络'],['hmi','HMI_1'],['ung','未分组的设备']].map((r,i)=>`<tr class="${i?'':'sel'}"><td>${ic(r[0],13)}</td><td>${r[1]}</td><td></td></tr>`).join('')
 +`</tbody></table><div class="s"><div></div><tia-scrollbar vertical></tia-scrollbar></div></div>`);

/* ---------- centre column ---------- */
define('tia-format-bar',`:host{display:flex;height:22px;align-items:center;background:#e9e9e9;padding-left:4px;gap:6px}
.f{width:90px}.z{width:31px}
.t{display:flex}
.g{display:flex;align-items:center}.g+.g{border-left:1px dotted #aaa;padding-left:2px;margin-left:2px}
.ib{width:19px;font-size:13px;color:#555;font-weight:600}.n{width:9px}`,
 ()=>{const m=a=>'<div class="g">'+a.map(n=>/^[<A]/.test(n)?`<button class="ib">${n}</button>`:bt(n,14,/^pm/.test(n)?'n':'')).join('')+'</div>';
 return `<tia-select class="f" dim label="font" arrow="dotlist"></tia-select><tia-select class="z" dim label="size" arrow="dropg"></tia-select>
<div class="t">${m(['<b>B</b>','<i>I</i>','<u>U</u>','<s>S</s>','A˟','pmg','al','pmg'])}${m(['fc','pmg','bk','pm','pen','pmg'])}${m(['lw','pmg','ln','pmg'])}${m(['ord','pmg','rot','pmg','alc','pmg','dis','pmg','same','pmg'])}${m(['brush','tab','pmg','zoomr'])}</div>`});

define('tia-canvas',`:host{display:block;position:relative;overflow:hidden;background:#767676;border-left:1px solid #999}
.scr{position:absolute;left:53px;top:0;right:0;bottom:0;background:repeating-linear-gradient(#b5b5b5 0 5px,transparent 5px 6px),repeating-linear-gradient(90deg,#b5b5b5 0 5px,#333 5px 6px)}
.top{position:absolute;left:53px;right:93px;top:0;height:7px;background:linear-gradient(90deg,#6e8496 15px,#000 15px 63px,#333 63px)}
.top i{position:absolute;left:66px;right:0;top:1px;bottom:0;background:repeating-linear-gradient(90deg,#b8b8b8 0 69px,#222 69px 70px,#b8b8b8 70px 90px)}
.tag{position:absolute;right:23px;top:4px;font:600 14px/18px "Noto Sans CJK SC",sans-serif;color:#14148c}
.val{position:absolute;right:22px;top:25px;width:110px;height:28px;background:#0ff;border:2px solid #6f8890;text-align:right;padding-right:20px;font:17px/24px "Liberation Serif",serif;color:#113}
.deg{position:absolute;right:3px;top:28px;display:flex;align-items:flex-start;font:18px/38px "Liberation Serif",serif;color:#222}.deg sup{font-size:12px;line-height:20px}
hr{position:absolute;left:60px;right:0;margin:0;border:0;border-top:1px solid #444}
.h1{top:104px}.h2{top:148px}.h3{top:272px}
.hb{position:absolute;font:500 15px/32px "Noto Sans CJK SC",sans-serif;background:linear-gradient(#5c5d68,#747582 20%,#50515c);border:1px solid #44454f;color:#f4f4f4;white-space:nowrap;padding:0}
.b1{right:0;top:166px;width:100px;height:32px;padding-left:47px;text-align:left;overflow:hidden}
.b2{right:0;top:223px;width:110px;height:36px;padding-right:9px;text-align:right}
.b3{right:26px;top:274px;width:110px;height:37px;background:#0006ff;text-align:right;padding-right:18px;border-color:#556}`,
 ()=>`<div class="scr"></div><div class="top"><i></i></div><div class="tag">水槽</div><div class="val">0</div><div class="deg"><sup>o</sup>C</div><hr class="h1"><hr class="h2"><button class="hb b1">回程复位</button><button class="hb b2">障复位</button><hr class="h3"><button class="hb b3">面</button>`);

define('tia-editor',`:host{flex:0 0 384px;display:flex;flex-direction:column;border-top:2px solid #f0f0f0;border-bottom:2px solid #1f2535}
.g{flex:0 0 20px;background:#cacaca;border-bottom:1px solid #999}
.m{flex:1;display:flex;min-height:0}.m tia-canvas{flex:1}
.m tia-scrollbar{--before:67px;--thumb:105px}
.b{flex:0 0 16px;display:flex;background:#e8e8e8}
.b tia-scrollbar{width:600px;--grow:1}
.z{flex:1;display:flex;align-items:center;justify-content:flex-end;gap:14px}
input{appearance:none;width:80px;height:13px;background:linear-gradient(#aaa,#aaa) 0 4px/100% 1px no-repeat,repeating-linear-gradient(90deg,#444 0 1px,transparent 1px 4px) 0 10px/100% 3px no-repeat}
input::-webkit-slider-thumb{appearance:none;width:6px;height:9px;margin-bottom:4px;background:#ddd;border:1px solid #999}`,
 ()=>`<div class="g"></div><tia-format-bar></tia-format-bar><div class="m"><tia-canvas></tia-canvas><tia-scrollbar vertical></tia-scrollbar></div><div class="b"><tia-scrollbar fill></tia-scrollbar><div class="z"><input type="range" aria-label="zoom" value="55">${ic('scr',13)}</div></div>`);

define('tia-inspector',`:host{flex:1;min-height:0;overflow:hidden;background:#efefef}
.h{height:20px;background:#b0b0b0;display:flex;justify-content:flex-end;align-items:center;padding-right:2px;border-bottom:2px solid #eee}.h .ib{width:15px}
.h i{align-self:stretch;width:60px;background:#d4d4d4;border-right:1px solid #888;margin-right:13px}
.tabs{height:21px;background:#c9c9c9;border-bottom:1px solid #999;display:flex;align-items:flex-end;padding-left:5px}
.tabs button{width:60px;height:17px;border:1px solid #8c8c8c;border-bottom:0;background:#c4c4c4;color:#555;font-size:12px;line-height:14px;font-weight:600;padding:0 0 0 8px;display:flex;align-items:center;gap:7px}
.dot{width:12px;height:12px;border-radius:50%;background:#e8e020}
.act{width:48px;height:16px;margin:0 0 -1px 75px;background:#efefef}
.tools{height:22px;display:flex;align-items:center;gap:2px;background:#e9e9e9;padding-left:3px}
.tools .ib{width:17px;height:18px;border:1px solid #7c90c8;background:#f6f6f6}
.tools tia-select{width:159px;margin-left:2px}
.sum{height:16px;padding-left:9px;line-height:16px}
.w{display:flex;height:110px}.w table{flex:1;width:0;align-self:flex-start}
th{height:16px;line-height:14px;background:linear-gradient(#e8e8e8,#c4c4c4);border-right:1px solid #aaa;border-top:1px solid #aaa;border-bottom:1px solid #bbb;padding-left:3px}
td{border-bottom:1px solid #fafafa;padding-left:4px}tr:nth-child(5n) td{height:16px}
td tia-icon{vertical-align:middle;margin-top:-1px}
.grp td:not(:last-child){background:#e1e1e1}
.p0 tia-icon,.p1 tia-icon{margin-right:7px}.p1{padding-left:18px}
.c{padding-left:13px}
.s{width:14px}.s div{height:16px;background:linear-gradient(#e8e8e8,#c4c4c4);border-top:1px solid #aaa}
tia-scrollbar{--before:42px;--thumb:18px;height:110px}`,
 ()=>{const t=(i,p,d,g,e,w,c='')=>`<tr class="${c}"><td>${ic(i,13)}</td>${p}<td>${d}</td><td class="c">${ic(g,12)}</td><td></td><td>${e}</td><td>${w}</td><td>10:56:28</td><td></td></tr>`;
 return `<div class="h"><i></i>${bt('wmax',11)}${bt('dock',11)}${bt('da',12)}</div><div class="tabs"><button>常规<span class="dot"></span></button><div class="act"></div></div>
<div class="tools">${bt('err',14)}${bt('warn',14)}${bt('info',14)}<tia-select label="filter" value="显示所有消息"></tia-select></div><div class="sum">编译完成（错误：0；警告：6）</div>
<div class="w"><table><colgroup><col style="width:22px"><col style="width:159px"><col><col style="width:41px"><col style="width:40px"><col style="width:43px"><col style="width:56px"><col style="width:64px"><col style="width:27px"></colgroup><thead><tr><th>!</th><th>路径</th><th>说明</th><th>转至</th><th>?</th><th>错误</th><th>警告</th><th>时间</th><th></th></tr></thead><tbody>`
 +t('warn','<td></td>','对象的位置或大小无效。','go','','')+t('info','<td></td>','软件编译已完成（设备版本：14.0.0.0）。','gog','','')
 +t('warn',`<td class="p0">${ic('topen',8)}语言和资源</td>`,'','gog','0','2','grp')+t('warn',`<td class="p1">${ic('topen',8)}项目图形</td>`,'','gog','0','2')
 +t('warn','<td></td>',"'Rotary_RG_On_256c' 图形使用了多种分辨率。这将导致 H...",'go','','')+t('warn','<td></td>',"'Rotary_RG_Off_256c' 图形使用了多种分辨率。这将导致 H...",'go','','')
 +`</tbody></table><div class="s"><div></div><tia-scrollbar vertical></tia-scrollbar></div></div>`});

/* ---------- toolbox ---------- */
define('tia-palette',`:host{display:grid;grid-template-columns:repeat(6,1fr);grid-auto-rows:29px;height:121px;width:202px;padding-top:2px;background:#efefef}`,
 e=>e.getAttribute('items').split(' ').map(n=>bt(n,24)).join(''));
define('tia-toolbox',`:host{display:flex;flex-direction:column;flex:1;min-height:0;border-top:2px solid #ececec}
h2{margin:0;font-size:12px;line-height:20px;height:21px;padding-left:4px;font-weight:700;background:linear-gradient(#fff,#dcdcdc);border-bottom:1px solid #999}
.o{height:22px;display:flex;align-items:center;background:#e9e9e9;padding-left:3px}.o .ib{width:19px}
.o tia-select{width:96px;margin-left:2px}.o .r{margin-left:auto;margin-right:2px}
.gt{height:20px;display:flex;align-items:center;padding-left:2px;background:#e9e9e9}.gt .ib{width:19px}
.row{display:flex;align-items:center;height:16px;border-bottom:1px solid #fafafa;font-weight:700}
.row .a{width:12px;display:flex;justify-content:center}
.row span{padding:0 3px 0 2px}.sel span{background:#c9d0da;font-weight:600}
.end{margin-top:auto;height:2px;background:linear-gradient(90deg,#bbb 82px,#777 82px 102px,#bbb 102px)}`,
 ()=>`<h2>选项</h2><div class="o">${bt('ptr',15)}${bt('stamp',14)}${bt('tool',14)}${bt('tbl',14)}<tia-select label="style" value="深色默认值"></tia-select>${bt('win',13,'r')}</div>
<tia-section text="基本对象"><tia-palette items="Bline Bpoly Bpgon Bell Bcir Brect Btext Bpic"></tia-palette></tia-section>
<tia-section text="元素"><tia-palette items="Eio Ebtn Esym Egio Edt Ebar Esw Elib Esl Egau Eclk"></tia-palette></tia-section>
<tia-section text="控件"><tia-palette items="Cal Ctr Cusr Cweb Crec Csat Crcp Cxy Cdia Cmed Cplc Cplv Csys Ccam Cpdf"></tia-palette></tia-section>
<tia-section text="图形"><div class="gt">${bt('gnew',14)}${bt('gdel',14)}</div><div class="row sel"><div class="a">${ic('tclosed',8)}</div>${ic('gf',14)}<span>WinCC 图形文件夹</span></div><div class="row"><div class="a"></div>${ic('gm',14)}<span>我的图形文件夹</span></div><div class="row"></div><div class="row"></div></tia-section><div class="end"></div>`);

/* ---------- download preview ---------- */
define('tia-download-dialog',`:host{display:block;position:absolute;left:348px;right:300px;top:129px;background:#cacaca;border:1px solid #eee;outline:1px solid #444;border-bottom:6px solid #202020}
.t{display:flex;align-items:center;justify-content:space-between;height:16px;padding:0 0 0 5px;background:linear-gradient(#707070 0,#555 6px,#1b1b1b 6px);color:#fff;font-size:12px;font-weight:600}
.t .ib{width:16px;height:16px;border-left:1px solid #777}
.q{display:flex;align-items:center;gap:5px;height:32px;padding:2px 0 0 11px;margin-bottom:5px}
.w{margin:0 9px 0 10px;background:#efefef;padding-bottom:4px}
th{height:15px;line-height:14px;background:linear-gradient(#e8e8e8,#c8c8c8);border-right:1px solid #b4b4b4;border-top:1px solid #ddd;padding-left:3px}
td{border-bottom:1px solid #fbfbfb;border-right:2px solid #f6f6f6;padding-left:3px;height:15px}
tbody tr:nth-child(5n) td{height:16px}
td.i{text-align:center;padding:0}td tia-icon{vertical-align:middle;margin-top:-1px}
.d{background:#e0e0e0}.pink{background:#ffbfcc}
.x1 tia-icon{margin:-1px 7px 0 0}.x2{padding-left:17px}.x2 tia-icon{margin:-1px 7px 0 0}
label{display:flex;align-items:center;gap:6px;height:14px;margin-left:-1px}
input{appearance:none;width:11px;height:11px;border:1px solid #555;background:linear-gradient(#eee,#c4c4c4)}
tia-scrollbar{height:15px;--grow:1;margin:0 9px 0 10px}
.r,.f{display:flex;justify-content:flex-end;gap:5px;padding:7px 9px 0 0}
.r{height:32px}.f{background:#afafaf;height:34px;padding-top:10px}
.r button,.f button{width:72px;height:16px;border:1px solid #8d8d8d;background:linear-gradient(#fff,#cfcfcf);padding:0;line-height:14px;font-weight:500}
button:disabled{color:#8c8c8c;background:linear-gradient(#f0f0f0,#dcdcdc)!important}
.grip{position:absolute;right:0;bottom:-6px;width:6px;height:6px;border-right:2px solid #fff;border-bottom:2px solid #fff}`,
 ()=>{const n='<tr><td></td><td></td><td></td><td></td><td></td><td></td></tr>';
 return `<div class="t"><span>下载预览</span>${bt('wx',12)}</div><div class="q">${ic('q',25)}<span>下载前检查</span></div>
<div class="w"><table><colgroup><col style="width:40px"><col style="width:24px"><col style="width:120px"><col><col style="width:119px"><col style="width:15px"></colgroup><thead><tr><th>状态</th><th>!</th><th>目标</th><th>消息</th><th>动作</th><th></th></tr></thead><tbody>
<tr><td class="i">${ic('stat',13)}</td><td class="i d">${ic('warn',13)}</td><td class="d x1">${ic('topen',8)}HMI_1</td><td class="d">由于不满足前提条件，将不执行下载！</td><td class="d"></td><td></td></tr>${n}
<tr><td></td><td class="i d">${ic('warn',13)}</td><td class="d x2">${ic('tclosed',8)}覆盖</td><td class="d">如果对象在线是否覆盖？</td><td><label><input type="checkbox">全部覆盖</label></td><td></td></tr>${n}
<tr><td></td><td class="i d">${ic('warn',13)}</td><td class="d x2">${ic('tclosed',8)}调整</td><td class="d">其他版本的组件已经安装在目标设备上。</td><td class="pink"><label><input type="checkbox">调整</label></td><td></td></tr>${n}
<tr><td></td><td class="i d">${ic('ok',13)}</td><td class="d x2">${ic('tclosed',8)}HMI 运行系统</td><td class="d">信息</td><td></td><td></td></tr>${n.repeat(7)}</tbody></table></div>
<tia-scrollbar fill></tia-scrollbar><div class="r"><button>刷新</button></div><div class="f"><button disabled>完成</button><button disabled>装载</button><button>取消</button></div><div class="grip"></div>`});
</script>
</body>
</html>
